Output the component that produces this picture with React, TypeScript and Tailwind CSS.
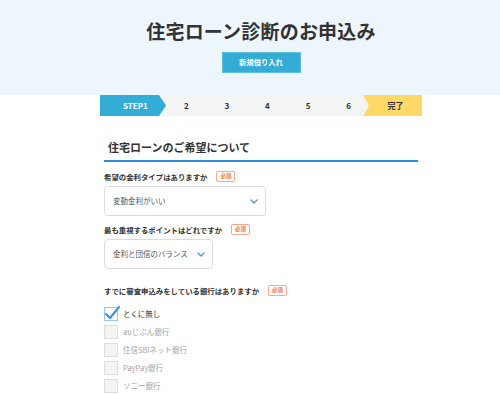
import React from 'react';

const banks = [
  { name: 'とくに無し', checked: true },
  { name: 'auじぶん銀行', checked: false },
  { name: '住信SBIネット銀行', checked: false },
  { name: 'PayPay銀行', checked: false },
  { name: 'ソニー銀行', checked: false },
];

function Required() {
  return (
    <span className="ml-[9px] inline-flex h-[11px] w-[19px] items-center justify-center rounded-[2px] border border-[#f5a98a] bg-white text-[5.5px] font-bold leading-none text-[#ef7a4e]">
      必須
    </span>
  );
}

function Chevron() {
  return (
    <svg width="8" height="5" viewBox="0 0 8 5" className="shrink-0">
      <polyline points="1,1 4,4 7,1" fill="none" stroke="#4a93dc" strokeWidth="1.3" strokeLinecap="round" strokeLinejoin="round" />
    </svg>
  );
}

function Label({ children }: { children: React.ReactNode }) {
  return (
    <div className="flex h-[11px] items-center">
      <span className="text-[7.4px] font-bold leading-none text-[#333]">{children}</span>
      <Required />
    </div>
  );
}

function SelectBox({ value, width }: { value: string; width: string }) {
  return (
    <div className={`flex h-[30px] items-center justify-between rounded-[4px] border border-[#dcdcdc] bg-white pl-[8px] pr-[7px] ${width}`}>
      <span className="text-[7.5px] leading-none text-[#555]">{value}</span>
      <Chevron />
    </div>
  );
}

export default function App() {
  const steps = ['2', '3', '4', '5', '6'];

  return (
    <div className="h-[394px] w-[500px] overflow-hidden bg-white font-['Noto_Sans_CJK_JP','Noto_Sans',sans-serif]">
      {/* ヘッダー */}
      <div className="h-[95px] bg-[#eef6fd]">
        <div className="ml-[100px] flex w-[322px] flex-col items-center pt-[21px]">
          <h1 className="text-[19px] font-bold leading-[19px] tracking-[0.2px] text-[#333]">住宅ローン診断のお申込み</h1>
          <div className="mt-[12px] flex h-[21px] w-[79px] items-center justify-center border border-[#5fc0e0] bg-[#33acd6] text-[7.3px] font-bold leading-none text-white">
            新規借り入れ
          </div>
        </div>
      </div>

      <div className="ml-[100px] w-[322px]">
        {/* ステップ */}
        <div className="flex h-[21px] items-stretch bg-[#f3f4f4]">
          <div className="flex w-[66px] items-center bg-[#33acd6] pl-[23px] [clip-path:polygon(0_0,59px_0,100%_50%,59px_100%,0_100%)]">
            <span className="text-[8px] font-bold leading-none text-white">STEP1</span>
          </div>
          {steps.map((s) => (
            <div key={s} className="flex w-[40.6px] items-center justify-center text-[8px] font-bold leading-none text-[#333]">
              {s}
            </div>
          ))}
          <div className="-ml-[6px] flex flex-1 items-center justify-center bg-[#ffd966] pl-[6px] [clip-path:polygon(0_0,100%_0,100%_100%,0_100%,6px_50%)]">
            <span className="text-[8px] font-bold leading-none text-[#333]">完了</span>
          </div>
        </div>

        <div className="px-[4px]">
          {/* セクション見出し */}
          <h2 className="mt-[26px] pl-[4px] text-[11px] font-bold leading-[11px] text-[#333]">住宅ローンのご希望について</h2>
          <div className="mt-[7px] h-[2px] bg-[#2d8fdc]" />

          <div className="mt-[9px]">
            <Label>希望の金利タイプはありますか</Label>
            <div className="mt-[4px]">
              <SelectBox value="変動金利がいい" width="w-[162px]" />
            </div>
          </div>

          <div className="mt-[8px]">
            <Label>最も重視するポイントはどれですか</Label>
            <div className="mt-[4px]">
              <SelectBox value="金利と団信のバランス" width="w-[109px]" />
            </div>
          </div>

          <div className="mt-[16px]">
            <Label>すでに審査申込みをしている銀行はありますか</Label>
            <div className="mt-[11px] flex flex-col gap-[4px]">
              {banks.map((b) => (
                <div key={b.name} className="flex h-[14px] items-center gap-[5px]">
                  <div className={`relative h-[14px] w-[14px] shrink-0 border ${b.checked ? 'border-[#9cc6ee] bg-white' : 'border-[#dedede] bg-[#f3f4f4]'}`}>
                    {b.checked && (
                      <svg width="18" height="18" viewBox="0 0 18 18" className="absolute -left-[1px] -top-[4px]">
                        <polyline points="2,10 6,14 15,3" fill="none" stroke="#3a8ee0" strokeWidth="2" strokeLinecap="round" strokeLinejoin="round" />
                      </svg>
                    )}
                  </div>
                  <span className={`text-[7.5px] leading-none ${b.checked ? 'text-[#333]' : 'text-[#a5a5a5]'}`}>{b.name}</span>
                </div>
              ))}
            </div>
          </div>
        </div>
      </div>
    </div>
  );
}
